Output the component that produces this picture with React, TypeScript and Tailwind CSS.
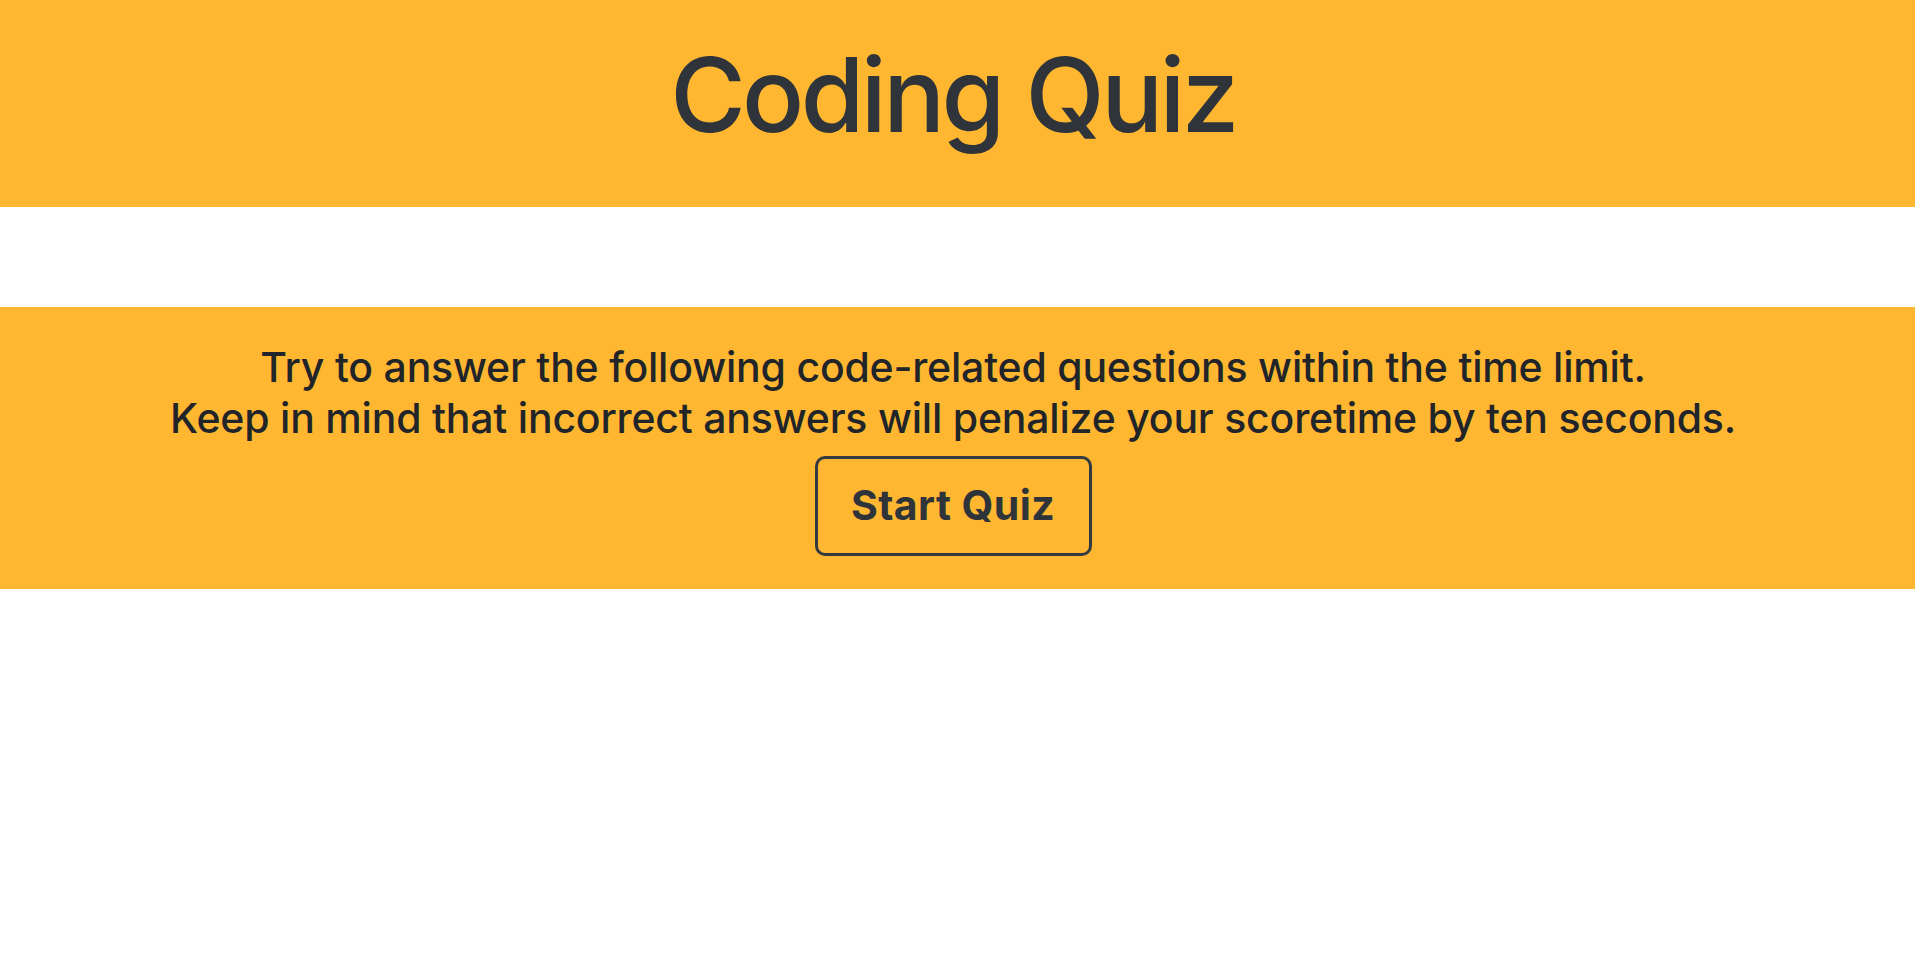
export default function App() {
  return (
    <div className="min-h-[965px] bg-white font-['Inter','Noto_Sans',sans-serif]">
      <header className="h-[207px] bg-[#ffb731] pt-[33px] pr-[9px] text-center">
        <h1 className="text-[103px] leading-[1.2] font-medium tracking-[-0.035em] text-[#2f343a]">Coding Quiz</h1>
      </header>
      <section className="mt-[100px] h-[282px] bg-[#ffb731] pt-[35px] pr-[9px] flex flex-col items-center">
        <p className="text-[41px] leading-[51px] font-medium tracking-[-0.005em] text-[#212529] text-center">
          Try to answer the following code-related questions within the time limit.
          <br />
          Keep in mind that incorrect answers will penalize your scoretime by ten seconds.
        </p>
        <button className="mt-[12px] w-[277px] h-[100px] rounded-[10px] border-[3px] border-[#343a40] text-[41px] font-bold tracking-[0.01em] text-[#2f343a]">
          Start Quiz
        </button>
      </section>
    </div>
  );
}
